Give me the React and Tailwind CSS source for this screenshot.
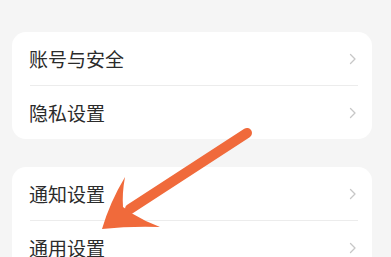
const groups = [
    ["账号与安全", "隐私设置"],
    ["通知设置", "通用设置"],
];

function Chevron() {
    return (
        <svg width="8" height="12" viewBox="0 0 8 12" fill="none" className="shrink-0">
            <path d="M1.5 1.5 L6 6 L1.5 10.5" stroke="#c7c7c7" strokeWidth="1.3" strokeLinecap="round" strokeLinejoin="round" />
        </svg>
    );
}

function Row({ label }) {
    return (
        <div className="flex h-[53px] items-center justify-between pl-[17px] pr-[15px]">
            <span className="text-[19px] leading-none text-[#2b2b2b]">{label}</span>
            <Chevron />
        </div>
    );
}

function Card({ items }) {
    return (
        <div className="overflow-hidden rounded-[14px] bg-white">
            {items.map((label, index) => (
                <div key={label}>
                    {index > 0 && <div className="ml-[18px] mr-[14px] h-px bg-[#ececec]" />}
                    <Row label={label} />
                </div>
            ))}
        </div>
    );
}

export default function App() {
    return (
        <div
            className="relative h-[257px] w-[391px] overflow-hidden bg-[#f5f5f5]"
            style={{ fontFamily: '"Noto Sans CJK SC", "Noto Sans", sans-serif' }}
        >
            <div className="flex flex-col gap-[28px] pl-[12px] pr-[19px] pt-[32px]">
                {groups.map((items) => (
                    <Card key={items[0]} items={items} />
                ))}
            </div>

            {/* annotation arrow */}
            <svg className="pointer-events-none absolute inset-0" width="391" height="257" viewBox="0 0 391 257">
                <line x1="247" y1="133" x2="130" y2="209" stroke="#f06a3b" strokeWidth="10" strokeLinecap="round" />
                <path
                    d="M102 229 Q110 202 125 177 Q122 193 123 207 L133 214 Q146 222 160 227 Q130 226 102 229 Z"
                    fill="#f06a3b"
                />
            </svg>
        </div>
    );
}
